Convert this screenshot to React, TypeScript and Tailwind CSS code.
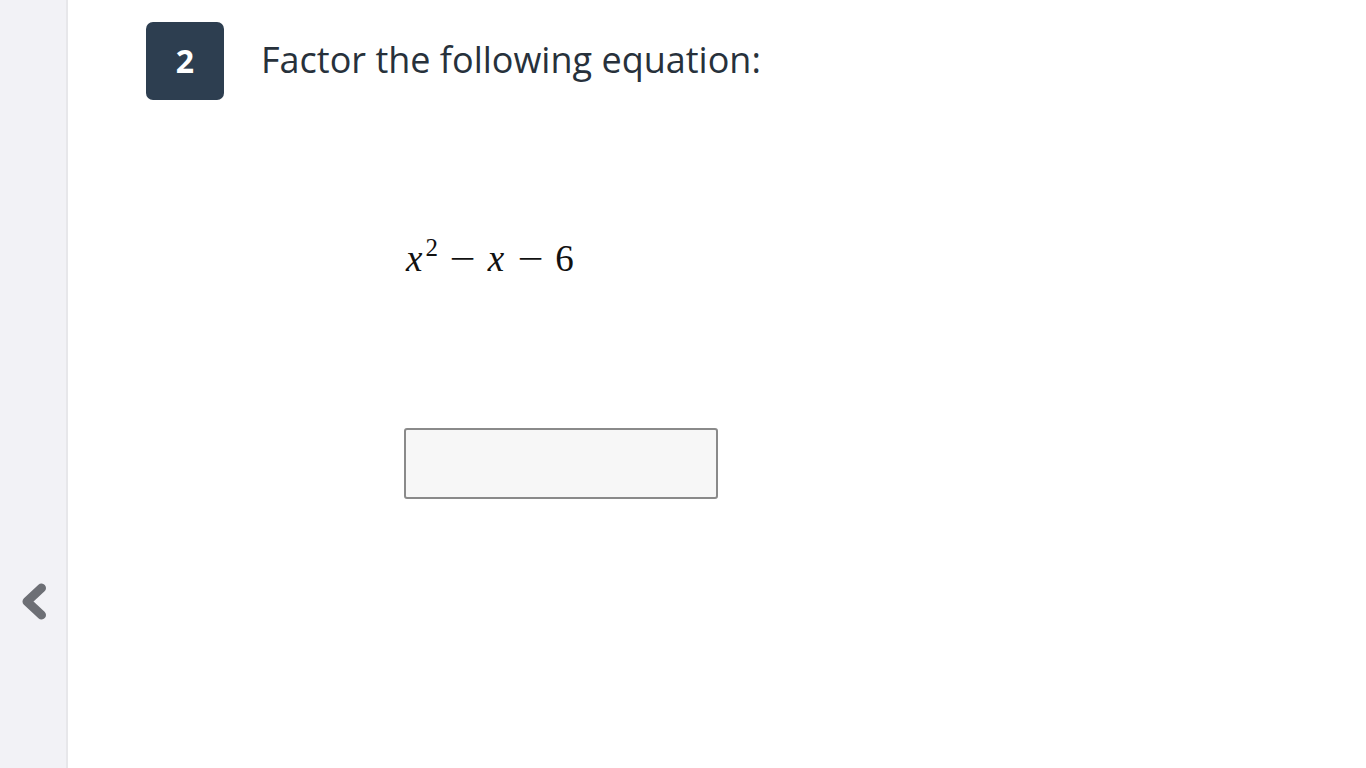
import React from "react";

export default function App() {
  return (
    <div className="flex h-[768px] w-[1366px] overflow-hidden bg-white" style={{ fontFamily: '"Open Sans", sans-serif' }}>
      <aside className="relative flex h-full w-[68px] shrink-0 flex-col bg-[#f2f2f6] border-r-2 border-[#e7e7ea]">
        <div className="mt-[582px] ml-[21px] w-[28px] h-[40px]">
          <svg width="28" height="40" viewBox="0 0 28 40">
            <path d="M20.5 6 L6 19.5 L20.5 33" fill="none" stroke="#6d6f75" strokeWidth="9" strokeLinecap="round" strokeLinejoin="round" />
          </svg>
        </div>
      </aside>
      <main className="flex flex-1 flex-col">
        <div className="mt-[22px] ml-[78px] flex items-center">
          <div className="flex h-[78px] w-[78px] items-center justify-center rounded-[7px] bg-[#2d3e50] text-[32px] font-bold text-white">2</div>
          <h1 className="ml-[37px] text-[36px] leading-none text-[#27313b] -mt-[2px]">Factor the following equation:</h1>
        </div>
        <div className="mt-[140px] ml-[338px] flex items-baseline text-[37px] leading-none text-[#111]" style={{ fontFamily: '"Liberation Serif", "DejaVu Serif", serif' }}>
          <span className="italic">x</span>
          <span className="text-[25px] ml-[3px] relative -top-[15px]">2</span>
          <span className="ml-[14px] inline-block scale-x-125">−</span>
          <span className="ml-[15px] italic">x</span>
          <span className="ml-[16px] inline-block scale-x-125">−</span>
          <span className="ml-[14px]">6</span>
        </div>
        <div className="mt-[151px] ml-[336px]">
          <input className="h-[71px] w-[314px] rounded-[3px] border-2 border-[#8a8a8a] bg-[#f7f7f7] outline-none" />
        </div>
      </main>
    </div>
  );
}
